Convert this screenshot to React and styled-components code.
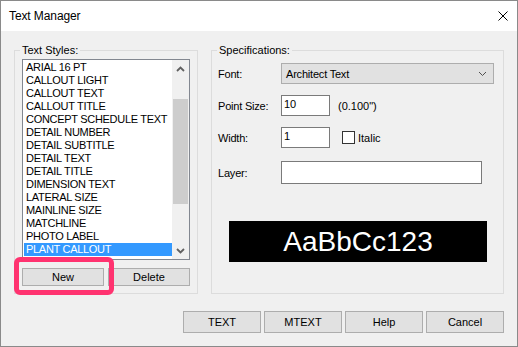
import React from "react";
import styled, { createGlobalStyle } from "styled-components";

const styles = [
  "ARIAL 16 PT",
  "CALLOUT LIGHT",
  "CALLOUT TEXT",
  "CALLOUT TITLE",
  "CONCEPT SCHEDULE TEXT",
  "DETAIL NUMBER",
  "DETAIL SUBTITLE",
  "DETAIL TEXT",
  "DETAIL TITLE",
  "DIMENSION TEXT",
  "LATERAL SIZE",
  "MAINLINE SIZE",
  "MATCHLINE",
  "PHOTO LABEL",
  "PLANT CALLOUT",
];

const Chevron = ({ up, thin }) => (
  <svg width="9" height="6" viewBox="0 0 9 6">
    <path
      d={up ? "M1 5 L4.5 1.5 L8 5" : "M1 1 L4.5 4.5 L8 1"}
      fill="none"
      stroke={thin ? "#505050" : "#606060"}
      strokeWidth={thin ? 1 : 1.8}
    />
  </svg>
);

const App = () => {
  return (
    <>
      <GlobalStyle />
      <Window>
        <TitleBar>
          <Title>Text Manager</Title>
          <Close>
            <svg width="10" height="10" viewBox="0 0 10 10">
              <path d="M0.5 0.5 L9.5 9.5 M9.5 0.5 L0.5 9.5" stroke="#000" strokeWidth="1" />
            </svg>
          </Close>
        </TitleBar>
        <Body>
          <Groups>
            <LeftGroup>
              <Legend>Text Styles:</Legend>
              <ListBox>
                <Items>
                  {styles.map((s, i) => (
                    <Item key={s} selected={i === styles.length - 1}>
                      {s}
                    </Item>
                  ))}
                </Items>
                <ScrollBar>
                  <ScrollArrow>
                    <Chevron up />
                  </ScrollArrow>
                  <Track>
                    <Thumb />
                  </Track>
                  <ScrollArrow>
                    <Chevron />
                  </ScrollArrow>
                </ScrollBar>
              </ListBox>
              <ButtonRow>
                <Marked>
                  <Button>New</Button>
                  <Highlight />
                </Marked>
                <Button>Delete</Button>
              </ButtonRow>
            </LeftGroup>
            <RightGroup>
              <Legend>Specifications:</Legend>
              <Row>
                <Label>Font:</Label>
                <Combo>
                  <span>Architect Text</span>
                  <Chevron thin />
                </Combo>
              </Row>
              <Row top={11}>
                <Label>Point Size:</Label>
                <Input width={49}>10</Input>
                <Note>(0.100")</Note>
              </Row>
              <Row top={11}>
                <Label>Width:</Label>
                <Input width={49}>1</Input>
                <Check />
                <CheckLabel>Italic</CheckLabel>
              </Row>
              <Row top={13}>
                <Label>Layer:</Label>
                <Input width={201} height={23} />
              </Row>
              <Preview>AaBbCc123</Preview>
            </RightGroup>
          </Groups>
          <Footer>
            <Button wide>TEXT</Button>
            <Button wide>MTEXT</Button>
            <Button wide>Help</Button>
            <Button wide>Cancel</Button>
          </Footer>
        </Body>
      </Window>
    </>
  );
};

export default App;

const GlobalStyle = createGlobalStyle`
  body {
    margin: 0;
    font-family: "Liberation Sans", Arial, sans-serif;
    font-size: 11px;
    color: #000;
  }
`;

const Window = styled.div`
  width: 518px;
  height: 347px;
  box-sizing: border-box;
  border: 1px solid #8a8a8a;
  background: #f0f0f0;
  display: flex;
  flex-direction: column;
  overflow: hidden;
`;

const TitleBar = styled.div`
  height: 30px;
  background: #fff;
  display: flex;
  align-items: center;
  justify-content: space-between;
  padding-left: 8px;
`;

const Title = styled.div`
  font-size: 12px;
  letter-spacing: -0.1px;
`;

const Close = styled.div`
  display: flex;
  margin-right: 9px;
`;

const Body = styled.div`
  flex: 1;
  display: flex;
  flex-direction: column;
  padding: 19px 13px 0 13px;
`;

const Groups = styled.div`
  display: flex;
  gap: 13px;
  height: 244px;
`;

const GroupBox = styled.div`
  position: relative;
  box-sizing: border-box;
  height: 100%;
  border: 1px solid #dcdcdc;
  display: flex;
  flex-direction: column;
`;

const LeftGroup = styled(GroupBox)`
  width: 184px;
  padding: 8px 0 0 7px;
`;

const RightGroup = styled(GroupBox)`
  width: 293px;
  padding: 12px 0 0 6px;
`;

const Legend = styled.div`
  position: absolute;
  top: -7px;
  left: 5px;
  padding: 0 2px;
  line-height: 13px;
  background: #f0f0f0;
`;

const ListBox = styled.div`
  width: 168px;
  height: 201px;
  box-sizing: border-box;
  border: 1px solid #828790;
  background: #fff;
  display: flex;
`;

const Items = styled.div`
  flex: 1;
  padding: 1px 0 0 1px;
  overflow: hidden;
`;

const Item = styled.div`
  height: 13px;
  line-height: 13px;
  padding-left: 2px;
  letter-spacing: -0.3px;
  white-space: nowrap;
  background: ${(p) => (p.selected ? "#3399ff" : "transparent")};
  color: ${(p) => (p.selected ? "#fff" : "#000")};
`;

const ScrollBar = styled.div`
  width: 17px;
  background: #f0f0f0;
  display: flex;
  flex-direction: column;
`;

const ScrollArrow = styled.div`
  height: 17px;
  display: flex;
  align-items: center;
  justify-content: center;
`;

const Track = styled.div`
  flex: 1;
  padding: 22px 1px 0 1px;
`;

const Thumb = styled.div`
  height: 105px;
  background: #cdcdcd;
`;

const ButtonRow = styled.div`
  display: flex;
  gap: 4px;
  margin-top: 8px;
`;

const Marked = styled.div`
  position: relative;
  display: flex;
`;

const Highlight = styled.div`
  position: absolute;
  top: -11px;
  left: -8px;
  right: -10px;
  bottom: -9px;
  border: 5px solid #ff3370;
  border-radius: 6px;
  pointer-events: none;
`;

const Button = styled.div`
  width: ${(p) => (p.wide ? 78 : 82)}px;
  height: ${(p) => (p.wide ? 22 : 18)}px;
  box-sizing: border-box;
  border: 1px solid #adadad;
  background: #e1e1e1;
  display: flex;
  align-items: center;
  justify-content: center;
`;

const Row = styled.div`
  display: flex;
  align-items: center;
  margin-top: ${(p) => p.top || 0}px;
`;

const Label = styled.div`
  width: 63px;
  letter-spacing: -0.2px;
`;

const Combo = styled.div`
  width: 213px;
  height: 21px;
  box-sizing: border-box;
  border: 1px solid #adadad;
  background: #e1e1e1;
  display: flex;
  align-items: center;
  justify-content: space-between;
  padding: 0 6px 0 4px;
  letter-spacing: -0.2px;
`;

const Input = styled.div`
  width: ${(p) => p.width}px;
  height: ${(p) => p.height || 21}px;
  box-sizing: border-box;
  border: 1px solid #7a7a7a;
  background: #fff;
  padding: 1px 2px;
  line-height: 14px;
`;

const Note = styled.div`
  margin-left: 8px;
`;

const Check = styled.div`
  width: 13px;
  height: 13px;
  box-sizing: border-box;
  border: 1px solid #333;
  background: #fff;
  margin-left: 12px;
`;

const CheckLabel = styled.div`
  margin-left: 3px;
`;

const Preview = styled.div`
  width: 258px;
  height: 41px;
  margin: 37px 0 0 11px;
  background: #000;
  color: #fff;
  font-size: 28px;
  display: flex;
  align-items: center;
  justify-content: center;
`;

const Footer = styled.div`
  display: flex;
  justify-content: flex-end;
  gap: 3px;
  margin-top: 17px;
`;
